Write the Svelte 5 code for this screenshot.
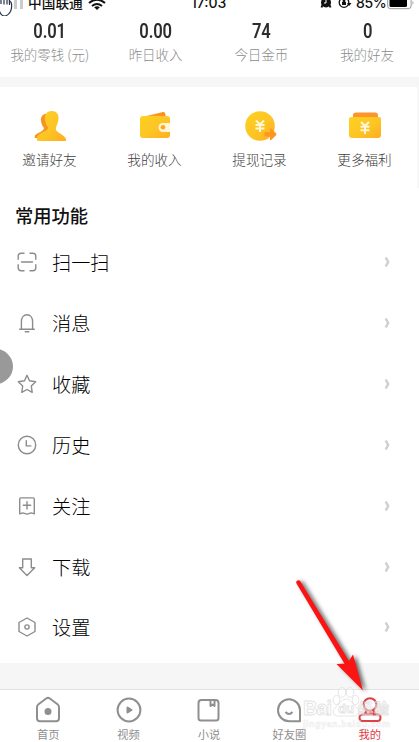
<script>
  const stats = [
    ['0.01', '我的零钱 (元)'],
    ['0.00', '昨日收入'],
    ['74', '今日金币'],
    ['0', '我的好友'],
  ];
  const actions = [
    ['friend', '邀请好友'],
    ['wallet', '我的收入'],
    ['coin', '提现记录'],
    ['gift', '更多福利'],
  ];
  const rows = [
    ['扫一扫', 'M1.2 7.2V4.2q0-3 3-3H7M13 1.2h2.8q3 0 3 3v3M18.800 12.800v3q0 3-3 3H13M7 18.800H4.200q-3 0-3-3v-3M4.500 10h11'],
    ['消息', 'M2.700 16.300h14.600M4.400 16V8.500c0-4 2.300-6.800 5.600-6.800s5.600 2.800 5.600 6.800V16M8.200 18.700h3.600'],
    ['收藏', 'M10 1.300l2.500 5.500 6.200.9-4.400 4.300.9 6.300L10 15.500l-5.200 2.800.9-6.300-4.400-4.300 6.200-.9z'],
    ['历史', 'M10 1.300a8.700 8.700 0 1 1 0 17.400a8.700 8.700 0 1 1 0-17.400M9.300 5.800v5.100h4.500'],
    ['关注', 'M4 1.900h12q1.300 0 1.300 1.300v14.600l-3-.9-4.300 1.200-4.300-1.200-3 .9V3.200Q2.700 1.900 4 1.900M6.300 9.300h7.400M10 5.600V13'],
    ['下载', 'M5.700 2h8.600v8.800h3.400L10 18.500l-7.700-7.700h3.400z'],
    ['设置', 'M10 1l8 4.500v9L10 19l-8-4.500v-9zM10 7.900a2.100 2.100 0 1 1 0 4.200a2.100 2.100 0 1 1 0-4.200'],
  ];
  const tabs = ['首页', '视频', '小说', '好友圈', '我的'];
</script>

<div class="app">
  <header>
    <svg class="signal" width="24" height="16" viewBox="0 0 24 16">
      <path d="M14 0h3v9h-3zM20 0h3v9h-3z" fill="#ccc" />
      <path d="M-1 9q1 6 5 7 4 0 6.500-4.500Q12 8 11.500 4 11 1 9.500 2V0" fill="#fff" stroke="#273044" stroke-width="1.200" />
      <path d="M1 0v4M4 0v4.500M7 0v4.500M9.500 0v5" stroke="#273044" stroke-width="1.200" />
    </svg>
    <span class="carrier">中国联通</span>
    <svg class="wifi" width="18" height="10" viewBox="0 0 18 10">
      <path d="M1 3q8-6.500 16 0M4 6q5-4 10 0" fill="none" stroke="#111" stroke-width="2" /><path d="M6.200 7.300q2.800-2 5.600 0L9 9.900z" fill="#111" />
    </svg>
    <span class="time">17:03</span>
    <svg class="alarm" width="32" height="10" viewBox="0 0 32 10">
      <circle cx="6" cy="2.500" r="5" fill="#111" /><path d="M2.500 5l-1 2.500M9.500 5l1 2.500" stroke="#111" stroke-width="2" /><path d="M6 0v3H4" stroke="#fff" fill="none" />
      <circle cx="24" cy="2.500" r="4.800" fill="none" stroke="#111" stroke-width="1.300" /><path d="M22 2h4v3h-4zM22.700 2V0h2.600v2" fill="#111" /><path d="M27 3h4.500l-2.300 3z" fill="#111" />
    </svg>
    <span class="percent">85%</span>
    <svg class="battery" width="28" height="10" viewBox="0 0 28 10">
      <path d="M.7 0v6q0 2.700 2.700 2.700h18q2.700 0 2.700-2.700V0" fill="none" stroke="#999" /><path d="M2.500 0h17.500v5.500q0 1.500-1.500 1.500H4q-1.500 0-1.500-1.500z" fill="#000" /><path d="M25.500 1.200q2 1 0 3.600z" fill="#999" />
    </svg>
  </header>

  <section class="stats">
    {#each stats as [value, label]}
      <div class="stat"><b>{value}</b><span>{label}</span></div>
    {/each}
  </section>
  <div class="band"></div>

  <section class="actions">
    {#each actions as [kind, label]}
      <div class="action">
        <svg width="34" height="34" viewBox="0 0 34 34">
          <defs><linearGradient id="g-{kind}" x1="0" y1="0" x2="1" y2="1"><stop offset="0" stop-color="#ffd020" /><stop offset=".55" stop-color="#fcc525" /><stop offset="1" stop-color="#ffad20" /></linearGradient>
          <linearGradient id="o-{kind}"><stop offset="0" stop-color="#ffa72b" /><stop offset="1" stop-color="#f98b1b" /></linearGradient></defs>
          {#if kind === 'friend'}
            <path d="M15 5C10 4 7.500 8 8 12c.3 3 1.500 5 3 7-.5 4-7 4.500-9 7.500q-1 2 0 2.500h12L20 8z" fill="#f79520" />
            <path d="M19 2c-5 0-7.500 3.500-7 8 .4 4 1.500 6 3 8.500.5 3.500-7 4.500-10 8-1.200 1.500-1.500 2.500-1 4.500.2.800 1 1 1.500 1h26c1.500 0 2-.5 1.500-2-1.500-4.500-10.500-6.500-10.200-10.500.2-2 2.300-5 2.700-9.500.4-5-2-8-6.500-8" fill="url(#g-friend)" />
          {:else if kind === 'wallet'}
            <path d="M8 7L25 3q2-.3 2.300 2l.7 5z" fill="url(#o-wallet)" />
            <path d="M5 7h24q3 0 3 3v16q0 3-3 3H5q-3 0-3-3V10q0-3 3-3" fill="url(#g-wallet)" />
            <path d="M32 14h-7a4.500 4.500 0 0 0 0 9h7z" fill="#fff6d6" /><circle cx="25" cy="18.300" r="2.300" fill="#ffa51f" />
          {:else if kind === 'coin'}
            <circle cx="17" cy="17" r="14.800" fill="url(#g-coin)" />
            <path d="M13 11.500l4 4 4-4M17 15.500V23M12.500 16h9M12.500 19.500h9" fill="none" stroke="#fff6d8" stroke-width="2" />
            <path d="M21.500 23h5.500v-2.500q0-2 1.500-.7l4.500 4.500q1 1 0 2l-4.500 4.500q-1.500 1.200-1.500-.8v-2.500h-5.500z" fill="#ff9620" />
          {:else}
            <path d="M8 3.500h19q3 0 3 3v3H5v-3q0-3 3-3" fill="#fd942d" />
            <path d="M4 8h27q2 0 2 2v16q0 3-3 3H4q-3 0-3-3V10q0-2 3-2" fill="url(#g-gift)" />
            <path d="M13 13l4 4 4-4M17 17v8M12.500 17.700h9M12.500 21.200h9" fill="none" stroke="#fff6d8" stroke-width="2" />
          {/if}
        </svg>
        <span>{label}</span>
      </div>
    {/each}
  </section>

  <h2>常用功能</h2>
  <ul>
    {#each rows as [label, d]}
      <li>
        <svg width="20" height="20" viewBox="0 0 20 20"><path {d} fill="none" stroke="#8c8c8c" stroke-width="1.400" stroke-linejoin="round" stroke-linecap="round" /></svg>
        <span>{label}</span>
        <svg width="8" height="12" viewBox="0 0 8 12"><path d="M2.700 1.500L5.200 6 2.700 10.500" fill="none" stroke="#cfcfcf" stroke-width="2.500" stroke-linejoin="round" /></svg>
      </li>
    {/each}
  </ul>
  <div class="gap"></div>

  <nav>
    {#each tabs as tab, i}
      <div class="tab" class:active={i === 4}>
        <svg width="28" height="28" viewBox="0 0 28 28" fill="none" stroke="currentColor" stroke-width="2" stroke-linejoin="round">
          {#if i === 0}<path d="M4.500 9.200L12.500 3.300q1.500-1 3 0l8 5.900q1.500 1.200 1.500 3v11q0 3-3 3H6q-3 0-3-3v-11q0-1.800 1.500-3" /><circle cx="14" cy="16.500" r="2.500" fill="currentColor" />
          {:else if i === 1}<circle cx="14" cy="15" r="11.400" /><path d="M12.500 12.500v5l4-2.500z" fill="currentColor" />
          {:else if i === 2}<path d="M6.500 5h14q3 0 3 3v15q0 2.500-2.500 2.500H6Q3.500 25.500 3.500 23V8q0-3 3-3M15.500 5v6l2-1.500 2 1.500V5" />
          {:else if i === 3}<path d="M25 26.200v-11A11 11 0 1 0 14 26.200zM10.500 17q3.500 4 7 0" />
          {:else}<circle cx="14" cy="9.500" r="6.300" /><path d="M9 18.500h10M9 18.500l2-4M19 18.500l-2-4M6.500 19.500h15q3 0 3 3.200t-3 3.300h-15q-3 0-3-3.300t3-3.200" />
          {/if}
        </svg>
        <span>{tab}</span>
      </div>
    {/each}
  </nav>

  <div class="handle"></div>
  <svg class="watermark" width="92" height="46" viewBox="0 0 92 46">
    <g fill="#fff" fill-opacity=".45" stroke="#d0d0d0" stroke-opacity=".6" stroke-width=".9">
      <ellipse cx="36.500" cy="14" rx="3.300" ry="4.500" /><ellipse cx="42" cy="6.500" rx="3.800" ry="4.800" /><ellipse cx="50" cy="6.500" rx="3.800" ry="4.800" /><ellipse cx="55.500" cy="14" rx="3.300" ry="4.500" />
      <path d="M46 13c-5 0-7 6-11 9-3 3-2 8 3 8h16c5 0 6-5 3-8-4-3-6-9-11-9" />
      <g class="wmtext"><text x="3" y="29" font-size="20" textLength="29">Bai</text><text x="38" y="27" font-size="13">du</text><text x="58" y="28" font-size="15" textLength="31">经验</text><text class="site" x="3" y="41" font-size="9" textLength="87">jingyan.baidu.com</text></g>
    </g>
  </svg>
  <svg class="arrow" width="90" height="125" viewBox="0 0 90 125">
    <path d="M17.500 11.500a2.200 2.200 0 0 1 4-2L70 89L74 82.500L84 118.500L57.500 92L65.500 91.700z" fill="#fb1414" />
  </svg>
</div>

<style>
  .app { position: relative; width: 419px; height: 742px; overflow: hidden; display: flex; flex-direction: column; background: #fff; color: #222; font-family: "Liberation Sans", "Noto Sans CJK SC", sans-serif; }
  header { display: flex; height: 17px; flex: none; color: #111; font-size: 14px; line-height: 18px; white-space: nowrap; align-items: flex-start; }
  header span { margin-top: -7px; }
  header .carrier { width: 59px; margin-left: 4px; margin-top: -8px; font-size: 13.700px; font-weight: 500; font-family: "Noto Sans CJK SC", sans-serif; line-height: 20px; }
  .time { margin-left: 85px; width: 38px; font-family: Inter, sans-serif; font-size: 14px; font-weight: 500; line-height: 20px; }
  .alarm { margin-left: 91px; }
  .percent { margin-left: 4px; width: 31px; font-family: Inter, sans-serif; font-size: 14px; font-weight: 500; line-height: 20px; letter-spacing: -.4px; }
  .wifi { margin-left: 1px; }
  svg { flex: none; }
  .stats { height: 60px; flex: none; display: flex; margin-left: -3px; width: 423px; }
  .stat { flex: 1; display: flex; flex-direction: column; align-items: center; white-space: nowrap; }
  .stat b { font: 600 20px/26px Roboto, sans-serif; transform: scaleX(.83); letter-spacing: -.2px; color: #2b2c2d; margin-top: 1px; }
  .stat span { font: 300 13.500px/20px "Noto Sans CJK SC", sans-serif; color: #8c8c8c; }
  .band { height: 10px; flex: none; background: #f6f6f6; }
  .actions { height: 101px; flex: none; display: flex; box-sizing: border-box; border-right: 2px solid #f7f7f7; margin-left: -3px; width: 422px; }
  .action { flex: 1; display: flex; flex-direction: column; align-items: center; padding-top: 22px; font: 300 13.600px/20px "Noto Sans CJK SC", sans-serif; color: #404040; }
  .action span { margin-top: 6px; }
  h2 { margin: 14px 0 0 15px; flex: none; height: 30px; font: 500 18.300px/26px "Noto Sans CJK SC", sans-serif; color: #111; }
  ul { list-style: none; margin: 0; padding: 0; height: 431px; flex: none; }
  li { display: flex; align-items: center; height: 60.850px; padding: 0 28px 0 17px; }
  li span { flex: 1; margin-left: 15px; font: 300 19.200px/28px "Noto Sans CJK SC", sans-serif; color: #000; }
  .gap { height: 26px; flex: none; background: #f6f6f6; border-bottom: 1px solid #e2e2e2; }
  nav { display: flex; width: 402px; margin-left: 8px; height: 52px; }
  .tab { flex: 1; display: flex; flex-direction: column; align-items: center; color: #8f8f8f; padding-top: 5px; }
  .tab span { font: 400 11.300px/16px "Noto Sans CJK SC", sans-serif; margin-top: 3px; }
  .tab.active { color: #df4045; }
  .handle { position: absolute; left: -22px; top: 349px; width: 35px; height: 35px; border-radius: 50%; background: #999; }
  .watermark { position: absolute; left: 300px; top: 686px; }
  .wmtext { font-family: "Liberation Sans", "Noto Sans CJK SC", sans-serif; font-weight: 700; }
  .site { stroke-opacity: .4; stroke-width: .6; }
  .arrow { position: absolute; left: 279px; top: 572px; filter: drop-shadow(3px 1px 2px rgba(0, 0, 0, .6)); overflow: visible; }
</style>
